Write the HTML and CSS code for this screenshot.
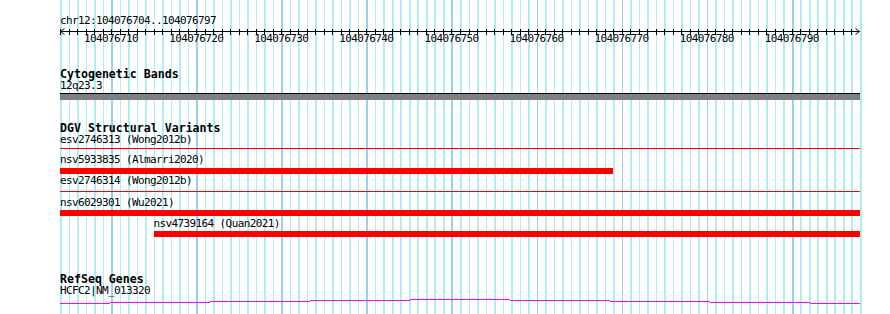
FILE: index.html
```html
<!DOCTYPE html>
<html lang="en">
<head>
    <meta charset="UTF-8">
    <title>chr12:104076704..104076797</title>
    <link rel="stylesheet" href="styles.css">
</head>
<body>

<div id="panel">
    <div class="label locus">chr12:104076704..104076797</div>

    <div class="ruler">
        <div class="axis">
            <svg width="800" height="6" viewBox="0 0 800 6">
                <path d="M0 2.5H800M4.5 -0.5L0.5 2.5L4.5 5.5M795.5 -0.5L799.5 2.5L795.5 5.5" stroke="#000" fill="none"/>
            </svg>
        </div>
        <div class="ruler-labels">
            <span>104076710</span>
            <span>104076720</span>
            <span>104076730</span>
            <span>104076740</span>
            <span>104076750</span>
            <span>104076760</span>
            <span>104076770</span>
            <span>104076780</span>
            <span>104076790</span>
        </div>
    </div>

    <div class="track" id="cytoTrack">
        <h2>Cytogenetic Bands</h2>
        <div class="label">12q23.3</div>
        <div class="band"></div>
    </div>

    <div class="track" id="dgvTrack">
        <h2>DGV Structural Variants</h2>

        <div class="variant">
            <div class="label">esv2746313 (Wong2012b)</div>
            <div class="sv-line"></div>
        </div>
        <div class="variant gap-large">
            <div class="label">nsv5933835 (Almarri2020)</div>
            <div class="sv-bar" style="width: 553.2px"></div>
        </div>
        <div class="variant gap-small">
            <div class="label">esv2746314 (Wong2012b)</div>
            <div class="sv-line line-low"></div>
        </div>
        <div class="variant gap-large">
            <div class="label">nsv6029301 (Wu2021)</div>
            <div class="sv-bar"></div>
        </div>
        <div class="variant gap-medium offset">
            <div class="label">nsv4739164 (Quan2021)</div>
            <div class="sv-bar"></div>
        </div>
    </div>

    <div class="track" id="refseqTrack">
        <h2>RefSeq Genes</h2>
        <div class="label">HCFC2|NM_013320</div>
        <svg class="gene" width="800" height="8" viewBox="0 0 800 8">
            <path d="M0 5.5H50M50 4.5H150M150 3.5H250M250 2.5H350M350 1.5H450M450 2.5H550M550 3.5H650M650 4.5H750M750 5.5H800" stroke="#ff00ff" fill="none"/>
        </svg>
    </div>
</div>

</body>
</html>
```

FILE: styles.css
```css
body {
    margin: 0;
    padding: 0;
    width: 890px;
    height: 314px;
    overflow: hidden;
    background-color: #ffffff;
    color: #000000;
    font-family: "DejaVu Sans Mono", "Liberation Mono", monospace;
    font-size: 11px;
    letter-spacing: -0.62px;
    line-height: 10px;
}

/* grid: one line per base, darker every 10 bases */
#panel {
    margin-left: 60px;
    width: 802px;
    height: 314px;
    padding-top: 16px;
    box-sizing: border-box;
    background-image:
        repeating-linear-gradient(90deg, transparent 0 51.06px, #98d2ee 51.06px 52.66px, transparent 52.66px 85.106px),
        repeating-linear-gradient(90deg, #aeeef2 0 1.6px, transparent 1.6px 8.5106px);
}

#panel > * {
    width: 800px;
}

.label {
    height: 10px;
    white-space: nowrap;
}

/* --- ruler --- */
.ruler {
    margin-top: 3px;
}

.axis {
    height: 6px;
    background-image: repeating-linear-gradient(90deg, #000 0 1px, transparent 1px 8.5106px);
}

.axis svg {
    display: block;
    overflow: visible;
}

.ruler-labels {
    display: flex;
    margin-top: -1px;
    padding-left: 8.5px;
    height: 10px;
}

.ruler-labels span {
    flex: none;
    width: 85.106px;
    text-align: center;
}

/* --- tracks --- */
.track h2 {
    margin: 0;
    font-size: 11.6px;
    letter-spacing: 0;
    line-height: 12px;
    font-weight: bold;
}

.track h2 + .label {
    margin-top: 1px;
}

#cytoTrack {
    margin-top: 24px;
}

.band {
    height: 6px;
    margin-top: 2px;
    border-top: 1px solid #000;
    background-color: #808080;
}

#dgvTrack {
    margin-top: 22px;
}

.variant:first-of-type .label {
    margin-top: 1px;
}

.variant.gap-small {
    margin-top: 2px;
}

.variant.gap-medium {
    margin-top: 3px;
}

.variant.gap-large {
    margin-top: 6px;
}

.variant.offset {
    padding-left: 93.6px;
}

.sv-line {
    height: 1px;
    margin-top: 3px;
    background-color: #ff0000;
}

.sv-line.line-low {
    margin-top: 5px;
}

.sv-bar {
    height: 6px;
    margin-top: 2px;
    background-color: #ff0000;
}

.gap-large .sv-bar[style] {
    margin-top: 3px;
}

#refseqTrack {
    margin-top: 37px;
}

#refseqTrack h2 {
    line-height: 11px;
}

.gene {
    display: block;
    margin-top: 2px;
}
```
